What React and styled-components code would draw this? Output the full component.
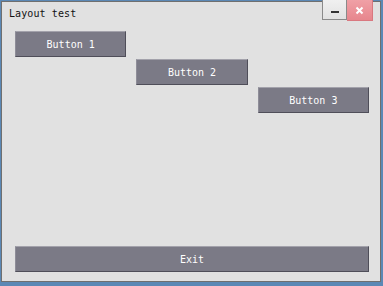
import styled, { createGlobalStyle } from "styled-components";

const Global = createGlobalStyle`
  html, body {
    margin: 0;
    padding: 0;
    background: #5b88b5;
  }
  body {
    width: 383px;
    height: 286px;
    overflow: hidden;
  }
`;

const Window = styled.div`
  margin: 1px 0 0 1px;
  width: 380px;
  height: 281px;
  box-sizing: border-box;
  border: 1px solid #6f6f6f;
  background: #e1e1e1;
  display: flex;
  flex-direction: column;
  font-family: "DejaVu Sans Mono", "Liberation Mono", monospace;
  font-size: 10px;
`;

const TitleBar = styled.div`
  height: 20px;
  display: flex;
  align-items: flex-start;
  padding-left: 7px;
  padding-right: 7px;
`;

const Title = styled.div`
  flex: 1;
  padding-top: 6px;
  color: #111;
  letter-spacing: 0.1px;
`;

const Controls = styled.div`
  display: flex;
  margin-top: -2px;
`;

const WinButton = styled.div`
  width: ${(p) => (p.$close ? 26 : 25)}px;
  height: ${(p) => (p.$close ? 21 : 20)}px;
  box-sizing: border-box;
  display: flex;
  align-items: center;
  justify-content: center;
  background: ${(p) =>
    p.$close
      ? "linear-gradient(#f0a0a6, #e7868d)"
      : "linear-gradient(#f0f0f0, #e2e2e2)"};
  border: 1px solid ${(p) => (p.$close ? "#d97880" : "#8a8a8a")};
  border-top: none;
  ${(p) => (p.$close ? "border-left: none;" : "")}
`;

const Minus = styled.div`
  width: 8px;
  height: 2px;
  margin-top: 4px;
  background: #333;
`;

const Content = styled.div`
  flex: 1;
  display: grid;
  grid-template-columns: repeat(3, 1fr);
  grid-auto-rows: 26px;
  column-gap: 10px;
  row-gap: 2px;
  padding: 9px 11px 0 13px;
  align-content: start;
`;

const Button = styled.button`
  grid-column: ${(p) => p.$pos};
  grid-row: ${(p) => p.$pos};
  font-family: inherit;
  font-size: 10px;
  color: #fff;
  background: #7b7a86;
  border: 1px solid #4f4e59;
  border-top-color: #a3a2ab;
  border-left-color: #8e8d98;
  padding: 0;
  margin: 0;
  height: 26px;
`;

const Bottom = styled.div`
  display: flex;
  padding: 0 11px 9px 13px;
`;

const WideButton = styled(Button)`
  flex: 1;
`;

export default function App() {
  return (
    <>
      <Global />
      <Window>
        <TitleBar>
          <Title>Layout test</Title>
          <Controls>
            <WinButton>
              <Minus />
            </WinButton>
            <WinButton $close>
              <svg width="9" height="9" viewBox="0 0 9 9">
                <path d="M1.5 1.5 L7.5 7.5 M7.5 1.5 L1.5 7.5" stroke="#fff" strokeWidth="2" />
              </svg>
            </WinButton>
          </Controls>
        </TitleBar>
        <Content>
          <Button $pos={1}>Button 1</Button>
          <Button $pos={2}>Button 2</Button>
          <Button $pos={3}>Button 3</Button>
        </Content>
        <Bottom>
          <WideButton>Exit</WideButton>
        </Bottom>
      </Window>
    </>
  );
}
